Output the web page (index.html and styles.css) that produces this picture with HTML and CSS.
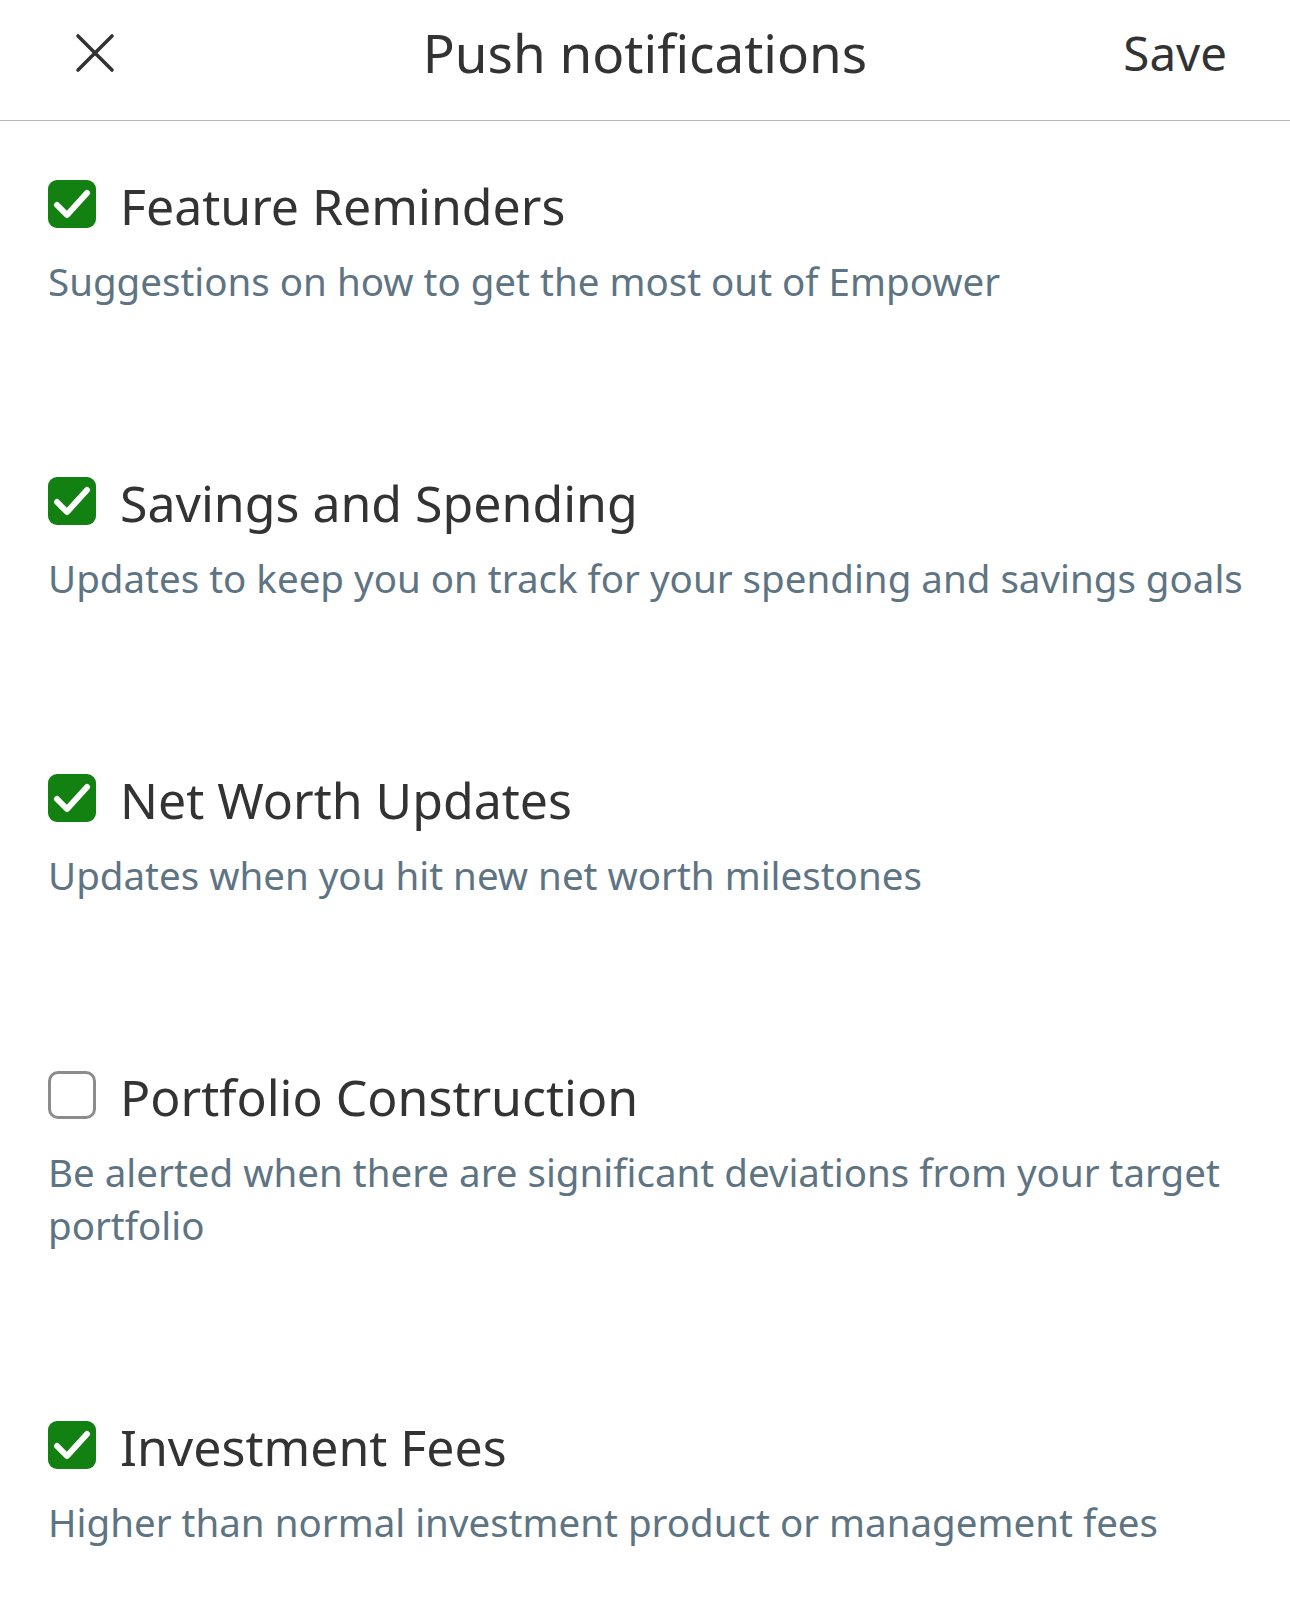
FILE: index.html
```html
<!DOCTYPE html>
<html lang="en">
<head>
<meta charset="utf-8">
<title>Push notifications</title>
<link rel="stylesheet" href="styles.css">
</head>
<body>
<header class="topbar">
  <button class="close" aria-label="Close">
    <svg width="42" height="42" viewBox="0 0 42 42"><path d="M4 4 L38 38 M38 4 L4 38" stroke="#333" stroke-width="3.6" stroke-linecap="round" fill="none"/></svg>
  </button>
  <h1 class="title">Push notifications</h1>
  <button class="save">Save</button>
</header>
<main class="list">
  <section class="item">
    <div class="row">
      <span class="box on"><svg viewBox="0 0 48 48" width="48" height="48"><path d="M9 25 L19 35 L39 13" stroke="#fff" stroke-width="6" stroke-linecap="round" stroke-linejoin="round" fill="none"/></svg></span>
      <h2 class="name">Feature Reminders</h2>
    </div>
    <p class="desc">Suggestions on how to get the most out of Empower</p>
  </section>
  <section class="item">
    <div class="row">
      <span class="box on"><svg viewBox="0 0 48 48" width="48" height="48"><path d="M9 25 L19 35 L39 13" stroke="#fff" stroke-width="6" stroke-linecap="round" stroke-linejoin="round" fill="none"/></svg></span>
      <h2 class="name">Savings and Spending</h2>
    </div>
    <p class="desc">Updates to keep you on track for your spending and savings goals</p>
  </section>
  <section class="item">
    <div class="row">
      <span class="box on"><svg viewBox="0 0 48 48" width="48" height="48"><path d="M9 25 L19 35 L39 13" stroke="#fff" stroke-width="6" stroke-linecap="round" stroke-linejoin="round" fill="none"/></svg></span>
      <h2 class="name">Net Worth Updates</h2>
    </div>
    <p class="desc">Updates when you hit new net worth milestones</p>
  </section>
  <section class="item">
    <div class="row">
      <span class="box off"></span>
      <h2 class="name">Portfolio Construction</h2>
    </div>
    <p class="desc">Be alerted when there are significant deviations from your target portfolio</p>
  </section>
  <section class="item">
    <div class="row">
      <span class="box on"><svg viewBox="0 0 48 48" width="48" height="48"><path d="M9 25 L19 35 L39 13" stroke="#fff" stroke-width="6" stroke-linecap="round" stroke-linejoin="round" fill="none"/></svg></span>
      <h2 class="name">Investment Fees</h2>
    </div>
    <p class="desc">Higher than normal investment product or management fees</p>
  </section>
</main>
</body>
</html>
```

FILE: styles.css
```css
* { box-sizing: border-box; }
html, body {
  margin: 0;
  padding: 0;
  background: #fff;
  font-family: "Noto Sans", "Open Sans", sans-serif;
  color: #333;
}
.topbar {
  display: grid;
  grid-template-columns: 1fr auto 1fr;
  align-items: center;
  height: 121px;
  padding: 0 63px 14px 63px;
  border-bottom: 1px solid #b9b9b9;
}
.close {
  justify-self: start;
  margin-left: 11px;
  background: none;
  border: 0;
  padding: 0;
  width: 42px;
  height: 42px;
  display: flex;
}
.title {
  margin: 0;
  font-size: 53px;
  font-weight: 400;
  line-height: 72px;
  color: #333;
}
.save {
  justify-self: end;
  background: none;
  border: 0;
  padding: 0;
  font-family: inherit;
  font-size: 47.5px;
  line-height: 70px;
  color: #333;
}
.list {
  padding: 49px 20px 0 48px;
  display: flex;
  flex-direction: column;
  gap: 159px;
}
.row {
  display: flex;
  align-items: center;
  gap: 24px;
}
.box {
  flex: none;
  width: 48px;
  height: 48px;
  border-radius: 9px;
  display: flex;
}
.box.on { background: #128112; }
.box.off { border: 3px solid #8c8c8c; border-radius: 10px; }
.name {
  margin: 0;
  font-size: 50px;
  font-weight: 400;
  line-height: 68px;
  color: #333;
  position: relative;
  top: 2px;
}
.desc {
  margin: 17px 0 0 0;
  font-size: 38.5px;
  line-height: 53px;
  color: #5e7483;
}
```
